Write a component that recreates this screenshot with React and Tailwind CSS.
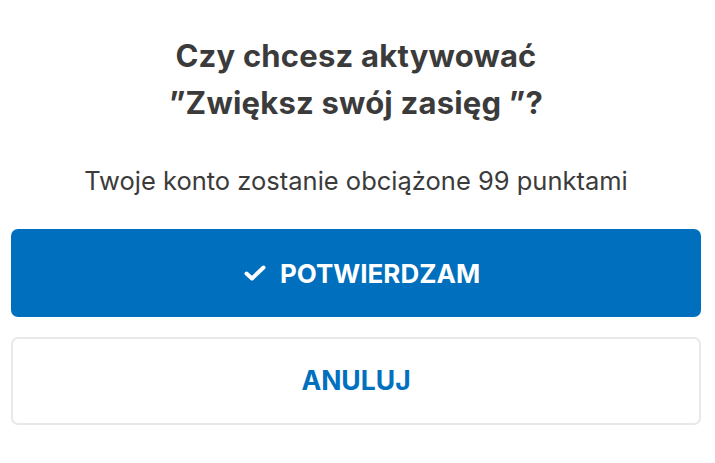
import React from 'react';

const CheckIcon = () => (
  <svg width="22" height="18" viewBox="0 0 22 18" fill="none" className="shrink-0">
    <path d="M2.5 9.5 L8 14.5 L19.5 3.5" stroke="white" strokeWidth="4" strokeLinecap="round" strokeLinejoin="round" />
  </svg>
);

const App = () => {
  return (
    <div className="w-[715px] h-[463px] bg-white flex flex-col pl-[11px] pr-[14px] pt-[32px] font-['Inter',sans-serif]">
      <h2 className="text-center text-[31px] leading-[47px] font-bold text-[#3b3b3b] tracking-[0.2px]">
        Czy chcesz aktywować
        <br />
        ”Zwiększ swój zasięg ”?
      </h2>

      <p className="text-center text-[25.5px] leading-[30px] text-[#3b3b3b] mt-[40px]">
        Twoje konto zostanie obciążone 99 punktami
      </p>

      <button className="mt-[33px] h-[88px] w-full rounded-[7px] bg-[#006fbd] flex items-center justify-center gap-[14px] pl-[12px] text-white text-[26px] font-bold">
        <CheckIcon />
        POTWIERDZAM
      </button>

      <button className="mt-[20px] h-[88px] w-full rounded-[7px] border-2 border-[#e8e8e8] bg-white flex items-center justify-center text-[#0070bf] text-[26.5px] font-bold">
        ANULUJ
      </button>
    </div>
  );
};

export default App;
